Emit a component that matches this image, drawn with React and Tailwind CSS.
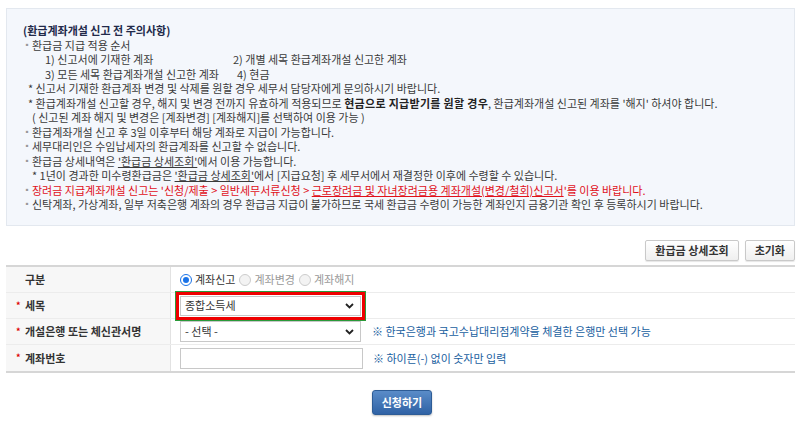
const FONT = { fontFamily: '"Noto Sans CJK KR", "Noto Sans", sans-serif' };

const Bullet = ({ children, className = '' }) => (
  <div className={`flex ${className}`}>
    <span className="w-[9px] shrink-0 text-[#999] text-[8px] leading-[14.5px]">▪</span>
    <span>{children}</span>
  </div>
);

const Row = ({ label, req, children, last }) => (
  <div className={`flex h-[26px] ${last ? '' : 'border-b border-[#ececec]'}`}>
    <div className="w-[165px] shrink-0 bg-[#f7f7f7] border-r border-[#e2e2e2] flex items-center pl-[10px] text-[#333] font-bold text-[11px]">
      <span className="w-[9px] text-[#d00] text-[9px]">{req ? '*' : ''}</span>
      {label}
    </div>
    <div className="flex items-center pl-[9px] flex-1">{children}</div>
  </div>
);

const Chevron = () => (
  <svg width="9" height="6" viewBox="0 0 9 6" className="absolute right-[6px] top-1/2 -translate-y-1/2">
    <path d="M1 1l3.5 3.5L8 1" fill="none" stroke="#222" strokeWidth="1.8" />
  </svg>
);

export default function App() {
  return (
    <div className="w-[808px] h-[427px] bg-white text-[11px] text-[#333]" style={FONT}>
      <div className="pt-[8px] pl-[6px] pr-[13px]">
        <div className="bg-[#f4f7fc] border border-[#e3e8ef] h-[218px] pl-[16px] pt-[14px] leading-[14.5px] text-[#3a3a3a]">
          <div className="font-bold text-[#222a4a]">(환급계좌개설 신고 전 주의사항)</div>
          <Bullet>환급금 지급 적용 순서</Bullet>
          <div className="flex pl-[22px]">
            <span className="w-[188px]">1) 신고서에 기재한 계좌</span>
            <span>2) 개별 세목 환급계좌개설 신고한 계좌</span>
          </div>
          <div className="flex pl-[22px]">
            <span className="w-[192px]">3) 모든 세목 환급계좌개설 신고한 계좌</span>
            <span>4) 현금</span>
          </div>
          <div className="pl-[5px]">* 신고서 기재한 환급계좌 변경 및 삭제를 원할 경우 세무서 담당자에게 문의하시기 바랍니다.</div>
          <div className="pl-[5px]">
            * 환급계좌개설 신고할 경우, 해지 및 변경 전까지 유효하게 적용되므로{' '}
            <b className="text-[#222] tracking-[0.3px]">현금으로 지급받기를 원할 경우</b>, 환급계좌개설 신고된 계좌를 '해지' 하셔야 합니다.
          </div>
          <div className="pl-[9px]">( 신고된 계좌 해지 및 변경은 [계좌변경] [계좌해지]를 선택하여 이용 가능 )</div>
          <Bullet>환급계좌개설 신고 후 3일 이후부터 해당 계좌로 지급이 가능합니다.</Bullet>
          <Bullet>세무대리인은 수임납세자의 환급계좌를 신고할 수 없습니다.</Bullet>
          <Bullet>
            환급금 상세내역은 <span className="underline">'환급금 상세조회'</span>에서 이용 가능합니다.
          </Bullet>
          <div className="pl-[9px]">
            * 1년이 경과한 미수령환급금은 <span className="underline">'환급금 상세조회'</span>에서 [지급요청] 후 세무서에서 재결정한 이후에 수령할 수 있습니다.
          </div>
          <Bullet>
            <span className="text-[#e0101a]">
              장려금 지급계좌개설 신고는 '신청/제출 &gt; 일반세무서류신청 &gt;{' '}
              <span className="underline">근로장려금 및 자녀장려금용 계좌개설(변경/철회)신고서</span>'를 이용 바랍니다.
            </span>
          </Bullet>
          <Bullet>신탁계좌, 가상계좌, 일부 저축은행 계좌의 경우 환급금 지급이 불가하므로 국세 환급금 수령이 가능한 계좌인지 금융기관 확인 후 등록하시기 바랍니다.</Bullet>
        </div>

        <div className="flex justify-end gap-[6px] mt-[14px] mb-[4px]">
          <button className="h-[21px] px-[9px] border border-[#c9c9c9] bg-gradient-to-b from-white to-[#efefef] rounded-[2px] font-bold text-[#333] text-[11px] shadow-[0_1px_1px_rgba(0,0,0,0.1)]">환급금 상세조회</button>
          <button className="h-[21px] px-[9px] border border-[#c9c9c9] bg-gradient-to-b from-white to-[#efefef] rounded-[2px] font-bold text-[#333] text-[11px] shadow-[0_1px_1px_rgba(0,0,0,0.1)]">초기화</button>
        </div>

        <div className="border-t-2 border-b-2 border-[#d6d6d6]">
          <Row label="구분">
            <label className="flex items-center gap-[3px] text-[#333]">
              <span className="w-[12px] h-[12px] rounded-full border border-[#1a73e8] flex items-center justify-center">
                <span className="w-[6px] h-[6px] rounded-full bg-[#1a73e8]" />
              </span>
              계좌신고
            </label>
            <label className="flex items-center gap-[3px] text-[#999] ml-[4px]">
              <span className="w-[12px] h-[12px] rounded-full border border-[#ccc] bg-[#f3f3f3]" />
              계좌변경
            </label>
            <label className="flex items-center gap-[3px] text-[#999] ml-[4px]">
              <span className="w-[12px] h-[12px] rounded-full border border-[#ccc] bg-[#f3f3f3]" />
              계좌해지
            </label>
          </Row>
          <Row label="세목" req>
            <div className="-ml-[5px] border border-[#2a9a3a]">
              <div className="border-[3px] border-[#ee0000] p-[1px]">
                <div className="relative w-[181px] h-[20px] border border-[#c8c8c8] bg-white flex items-center pl-[4px] text-[#333]">
                  종합소득세
                  <Chevron />
                </div>
              </div>
            </div>
          </Row>
          <Row label="개설은행 또는 체신관서명" req>
            <div className="relative w-[181px] h-[21px] border border-[#c8c8c8] bg-white flex items-center pl-[4px] text-[#333]">
              - 선택 -
              <Chevron />
            </div>
            <span className="ml-[11px] text-[#2060a0]">※ 한국은행과 국고수납대리점계약을 체결한 은행만 선택 가능</span>
          </Row>
          <Row label="계좌번호" req last>
            <div className="w-[183px] h-[21px] border border-[#c8c8c8] bg-white" />
            <span className="ml-[10px] text-[#2060a0]">※ 하이픈(-) 없이 숫자만 입력</span>
          </Row>
        </div>

        <div className="flex justify-center mt-[17px]">
          <button className="h-[25px] px-[9px] ml-[3px] rounded-[3px] border border-[#2d5c96] bg-gradient-to-b from-[#5a8cc8] to-[#2f62a5] text-white font-bold text-[11px] shadow-[0_1px_2px_rgba(0,0,0,0.25)]">신청하기</button>
        </div>
      </div>
    </div>
  );
}
